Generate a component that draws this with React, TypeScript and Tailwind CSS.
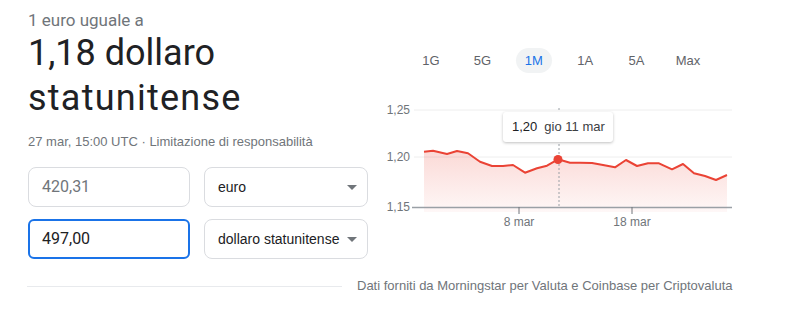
import React from "react";

const pts: [number, number][] = [
  [424, 151.7], [433, 150.7], [447, 154], [457, 151], [468, 153.3], [480, 161.7],
  [492, 166], [503, 166], [513, 165], [525, 172.7], [537, 168.3], [547, 165.7],
  [558, 159.3], [570, 162.7], [580, 162.7], [592, 163], [603, 165], [615, 167.3],
  [626, 160], [637, 166], [648, 163.3], [659, 163.3], [672, 169.3], [683, 164],
  [694, 173.3], [705, 176], [716, 180], [727, 175],
];

const linePath = pts.map((p, i) => `${i === 0 ? "M" : "L"}${p[0]} ${p[1]}`).join(" ");
const areaPath = `${linePath} L727 212 L424 212 Z`;

const tabs = ["1G", "5G", "1M", "1A", "5A", "Max"];

function Caret() {
  return (
    <svg width="10" height="5" viewBox="0 0 10 5" className="shrink-0">
      <path d="M0 0 L10 0 L5 5 Z" fill="#70757a" />
    </svg>
  );
}

export default function App() {
  return (
    <div className="w-[800px] h-[309px] bg-white overflow-hidden" style={{ fontFamily: "'Liberation Sans', Arial, sans-serif" }}>
      <div className="flex">
        <div className="w-[370px] pl-[28px] shrink-0">
          <div className="pt-[10px] text-[17px] leading-[20px] text-[#70757a]" style={{ fontFamily: "Roboto, Arial, sans-serif" }}>
            1 euro uguale a
          </div>
          <div className="mt-[1px] text-[36px] leading-[45px] text-[#202124]" style={{ fontFamily: "Roboto, Arial, sans-serif" }}>
            <div>1,18 dollaro</div>
            <div className="tracking-[1.25px]">statunitense</div>
          </div>
          <div className="mt-[13px] text-[13px] leading-[16px] text-[#70757a]">
            27 mar, 15:00 UTC · Limitazione di responsabilità
          </div>
          <div className="mt-[17px] flex flex-col gap-[12px]">
            <div className="flex gap-[14px]">
              <div className="w-[162px] h-[40px] rounded-[8px] border border-[#dadce0] flex items-center pl-[13px] text-[16px] text-[#70757a]" style={{ fontFamily: "Roboto, Arial, sans-serif" }}>
                420,31
              </div>
              <div className="w-[164px] h-[40px] rounded-[8px] border border-[#dadce0] flex items-center justify-between pl-[13px] pr-[10px] text-[14px] text-[#202124]">
                <span>euro</span>
                <Caret />
              </div>
            </div>
            <div className="flex gap-[14px]">
              <div className="w-[162px] h-[40px] rounded-[6px] border-2 border-[#1a73e8] flex items-center pl-[12px] text-[16px] text-[#202124]" style={{ fontFamily: "Roboto, Arial, sans-serif" }}>
                497,00
              </div>
              <div className="w-[164px] h-[40px] rounded-[8px] border border-[#dadce0] flex items-center justify-between pl-[13px] pr-[10px] text-[14px] text-[#202124]">
                <span>dollaro statunitense</span>
                <Caret />
              </div>
            </div>
          </div>
        </div>
        <div className="relative flex-1">
          <div className="mt-[48px] ml-[43px] flex gap-[15.4px]">
            {tabs.map((t) => (
              <div
                key={t}
                className={
                  "w-[36px] h-[25px] rounded-full flex items-center justify-center text-[13px] " +
                  (t === "1M" ? "bg-[#f1f3f4] text-[#1a73e8]" : "text-[#5f6368]")
                }
              >
                {t}
              </div>
            ))}
          </div>
          <svg width="430" height="140" viewBox="370 95 430 140" className="mt-[22px] block">
            <defs>
              <linearGradient id="fillg" x1="0" y1="0" x2="0" y2="1">
                <stop offset="0%" stopColor="#ea4335" stopOpacity="0.2" />
                <stop offset="100%" stopColor="#ea4335" stopOpacity="0.04" />
              </linearGradient>
            </defs>
            <line x1="414" y1="110" x2="732" y2="110" stroke="#eeeeee" strokeWidth="1" />
            <line x1="414" y1="157" x2="732" y2="157" stroke="#eeeeee" strokeWidth="1" />
            <path d={areaPath} fill="url(#fillg)" />
            <line x1="559" y1="108" x2="559" y2="207" stroke="#9aa0a6" strokeWidth="1" strokeDasharray="2 2" />
            <line x1="412" y1="207.5" x2="732" y2="207.5" stroke="#9aa0a6" strokeWidth="1.5" />
            <line x1="519" y1="207" x2="519" y2="214" stroke="#70757a" strokeWidth="1" />
            <line x1="632" y1="207" x2="632" y2="214" stroke="#70757a" strokeWidth="1" />
            <path d={linePath} fill="none" stroke="#ea4335" strokeWidth="2" strokeLinejoin="round" />
            <circle cx="558" cy="159.5" r="4.5" fill="#ea4335" />
            <g fontFamily="'Liberation Sans', Arial, sans-serif" fontSize="12" fill="#70757a">
              <text x="410" y="114" textAnchor="end">1,25</text>
              <text x="410" y="161" textAnchor="end">1,20</text>
              <text x="410" y="211" textAnchor="end">1,15</text>
              <text x="519" y="226" textAnchor="middle">8 mar</text>
              <text x="632" y="226" textAnchor="middle">18 mar</text>
            </g>
          </svg>
          <div className="absolute left-[133px] top-[112px] w-[110px] h-[30px] bg-white rounded-[3px] shadow-[0_1px_3px_rgba(0,0,0,0.25)] flex items-center pl-[9px] text-[13px] text-[#3c4043] whitespace-nowrap">
            <span className="text-[#202124]">1,20</span>
            <span className="ml-[7px]">gio 11 mar</span>
          </div>
        </div>
      </div>
      <div className="mt-[19px] flex items-center h-[16px]">
        <div className="ml-[27px] w-[315px] h-px bg-[#e8eaed]" />
        <div className="ml-[15px] text-[13px] leading-[16px] text-[#70757a] whitespace-nowrap">
          Dati forniti da Morningstar per Valuta e Coinbase per Criptovaluta
        </div>
      </div>
    </div>
  );
}
